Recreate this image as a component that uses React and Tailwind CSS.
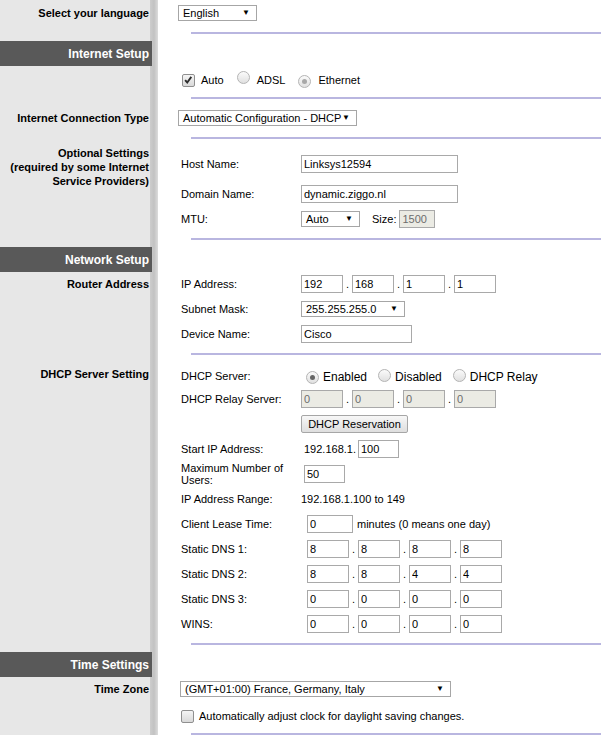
import React from "react";

const Left = ({ className = "", children }) => (
  <div
    className={`w-[158px] shrink-0 pr-[9px] text-right font-bold text-[11px] leading-[14px] text-black ${className}`}
  >
    {children}
  </div>
);

const Header = ({ children }) => (
  <div className="flex h-[25px]">
    <div className="w-[152px] bg-[#595959] text-white font-bold text-[12px] flex items-center justify-end pr-[3px]">
      {children}
    </div>
  </div>
);

const Line = ({ className = "" }) => (
  <div className={`ml-[33px] mr-[8px] h-[2px] bg-[#b9b6e0] ${className}`} />
);

const Select = ({ className = "", children }) => (
  <div
    className={`flex items-center justify-between h-[16px] border border-[#a6a6a6] bg-white pl-[4px] pr-[6px] text-[11px] text-black ${className}`}
  >
    <span className="leading-none">{children}</span>
    <span className="text-[8px] leading-none">▼</span>
  </div>
);

const Input = ({ value, className = "", disabled }) => (
  <input
    readOnly
    value={value}
    className={`h-[18px] border border-[#a9a9a9] px-[2px] text-[11px] outline-none ${
      disabled ? "bg-[#ebebe4] text-[#6d6d6d]" : "bg-white text-black"
    } ${className}`}
  />
);

const Field = ({ label, className = "", children }) => (
  <div className={`flex items-center ml-[23px] text-[11px] leading-[14px] text-black ${className}`}>
    <div className="w-[120px] shrink-0 leading-[12px]">{label}</div>
    {children}
  </div>
);

const Quad = ({ vals, disabled }) => (
  <div className="flex items-center h-[18px]">
    {vals.map((v, i) => (
      <React.Fragment key={i}>
        {i > 0 && (
          <span className="w-[9px] h-[18px] flex items-end justify-center pb-[3px] text-[11px] leading-none">
            .
          </span>
        )}
        <Input value={v} disabled={disabled} className="w-[42px]" />
      </React.Fragment>
    ))}
  </div>
);

const Checkbox = ({ checked }) => (
  <span className="relative inline-block w-[13px] h-[13px] shrink-0 rounded-[2px] border border-[#8f8f8f] bg-[linear-gradient(#f4f4f4,#d9d9d9)]">
    {checked && (
      <svg viewBox="0 0 13 13" className="absolute inset-0 w-[11px] h-[11px]">
        <path d="M2.5 6 L5 8.8 L9.8 2.2" fill="none" stroke="#2c2c2c" strokeWidth="2.2" />
      </svg>
    )}
  </span>
);

const Radio = ({ dot }) => (
  <span className="inline-flex items-center justify-center w-[13px] h-[13px] shrink-0 rounded-full border border-[#b4b4b4] bg-[linear-gradient(#fbfbfb,#e0e0e0)]">
    {dot && <span className={`w-[5px] h-[5px] rounded-full ${dot}`} />}
  </span>
);

export default function App() {
  return (
    <div className="w-full h-[735px] overflow-hidden bg-[linear-gradient(to_right,#e7e7e7_150px,#cdcdcd_150px,#c2c2c2_154px,#dcdcdc_158px,#ffffff_158px)] font-['Liberation_Sans',Arial,sans-serif]">
      {/* Language */}
      <div className="flex">
        <Left className="pt-[6px]">Select your language</Left>
        <div className="flex-1">
          <Select className="mt-[5px] ml-[20px] w-[79px]">English</Select>
          <Line className="mt-[11px]" />
          <div className="h-[7px]" />
        </div>
      </div>

      <Header>Internet Setup</Header>

      <div className="flex">
        <Left className="pt-[45px]">Internet Connection Type</Left>
        <div className="flex-1">
          <div className="flex items-center h-[28px] ml-[24px] text-[11px] text-black">
            <Checkbox checked />
            <span className="ml-[6px]">Auto</span>
            <span className="ml-[13px]"><Radio /></span>
            <span className="ml-[7px]">ADSL</span>
            <span className="ml-[13px]"><Radio dot="bg-[#a8a8a8]" /></span>
            <span className="ml-[7px]">Ethernet</span>
          </div>
          <Line className="mt-[3px]" />
          <Select className="mt-[11px] ml-[20px] w-[179px]">Automatic Configuration - DHCP</Select>
          <Line className="mt-[11px]" />
        </div>
      </div>

      <div className="flex">
        <Left className="pt-[7px] leading-[12px]">
          Optional Settings
          <br />
          (required by some Internet
          <br />
          Service Providers)
        </Left>
        <div className="flex-1">
          <Field label="Host Name:" className="mt-[16px]">
            <Input value="Linksys12594" className="w-[157px]" />
          </Field>
          <Field label="Domain Name:" className="mt-[12px]">
            <Input value="dynamic.ziggo.nl" className="w-[157px]" />
          </Field>
          <Field label="MTU:" className="mt-[7px]">
            <Select className="w-[59px]">Auto</Select>
            <span className="ml-[12px]">Size:</span>
            <Input value="1500" disabled className="ml-[3px] w-[36px]" />
          </Field>
          <Line className="mt-[10px]" />
          <div className="h-[7px]" />
        </div>
      </div>

      <Header>Network Setup</Header>

      <div className="flex">
        <Left className="pt-[5px]">Router Address</Left>
        <div className="flex-1">
          <Field label="IP Address:" className="mt-[3px]">
            <Quad vals={["192", "168", "1", "1"]} />
          </Field>
          <Field label="Subnet Mask:" className="mt-[8px]">
            <Select className="w-[104px]">255.255.255.0</Select>
          </Field>
          <Field label="Device Name:" className="mt-[8px]">
            <Input value="Cisco" className="w-[111px]" />
          </Field>
          <Line className="mt-[10px]" />
        </div>
      </div>

      <div className="flex">
        <Left className="pt-[12px]">DHCP Server Setting</Left>
        <div className="flex-1">
          <Field label="DHCP Server:" className="mt-[11px] h-[20px]">
            <div className="flex items-center ml-[5px] text-[12px] pt-[2px]">
              <Radio dot="bg-[#666666]" />
              <span className="ml-[4px]">Enabled</span>
              <span className="ml-[11px]"><Radio /></span>
              <span className="ml-[4px]">Disabled</span>
              <span className="ml-[11px]"><Radio /></span>
              <span className="ml-[4px]">DHCP Relay</span>
            </div>
          </Field>
          <Field label="DHCP Relay Server:" className="mt-[4px]">
            <Quad vals={["0", "0", "0", "0"]} disabled />
          </Field>
          <button className="block mt-[7px] ml-[143px] h-[18px] w-[107px] rounded-[2px] border border-[#a6a6a6] bg-[linear-gradient(#f7f7f7,#dedede)] text-[11px] text-black leading-none">
            DHCP Reservation
          </button>
          <Field label="Start IP Address:" className="mt-[7px]">
            <span className="ml-[3px]">192.168.1.</span>
            <Input value="100" className="ml-[2px] w-[41px]" />
          </Field>
          <Field
            label={
              <>
                Maximum Number of
                <br />
                Users:
              </>
            }
            className="mt-[4px]"
          >
            <Input value="50" className="ml-[3px] w-[41px]" />
          </Field>
          <Field label="IP Address Range:" className="mt-[6px] h-[14px]">
            <span>192.168.1.100 to 149</span>
          </Field>
          <Field label="Client Lease Time:" className="mt-[9px]">
            <Input value="0" className="ml-[6px] w-[46px]" />
            <span className="ml-[4px]">minutes (0 means one day)</span>
          </Field>
          <Field label="Static DNS 1:" className="mt-[7px]">
            <div className="ml-[6px]"><Quad vals={["8", "8", "8", "8"]} /></div>
          </Field>
          <Field label="Static DNS 2:" className="mt-[7px]">
            <div className="ml-[6px]"><Quad vals={["8", "8", "4", "4"]} /></div>
          </Field>
          <Field label="Static DNS 3:" className="mt-[7px]">
            <div className="ml-[6px]"><Quad vals={["0", "0", "0", "0"]} /></div>
          </Field>
          <Field label="WINS:" className="mt-[7px]">
            <div className="ml-[6px]"><Quad vals={["0", "0", "0", "0"]} /></div>
          </Field>
          <Line className="mt-[10px]" />
          <div className="h-[7px]" />
        </div>
      </div>

      <Header>Time Settings</Header>

      <div className="flex">
        <Left className="pt-[5px]">Time Zone</Left>
        <div className="flex-1">
          <Select className="mt-[4px] ml-[22px] w-[271px]">(GMT+01:00) France, Germany, Italy</Select>
          <div className="flex items-center h-[16px] mt-[11px] ml-[23px] text-[11px] text-black">
            <Checkbox />
            <span className="ml-[5px]">Automatically adjust clock for daylight saving changes.</span>
          </div>
          <Line className="mt-[9px]" />
        </div>
      </div>
    </div>
  );
}
